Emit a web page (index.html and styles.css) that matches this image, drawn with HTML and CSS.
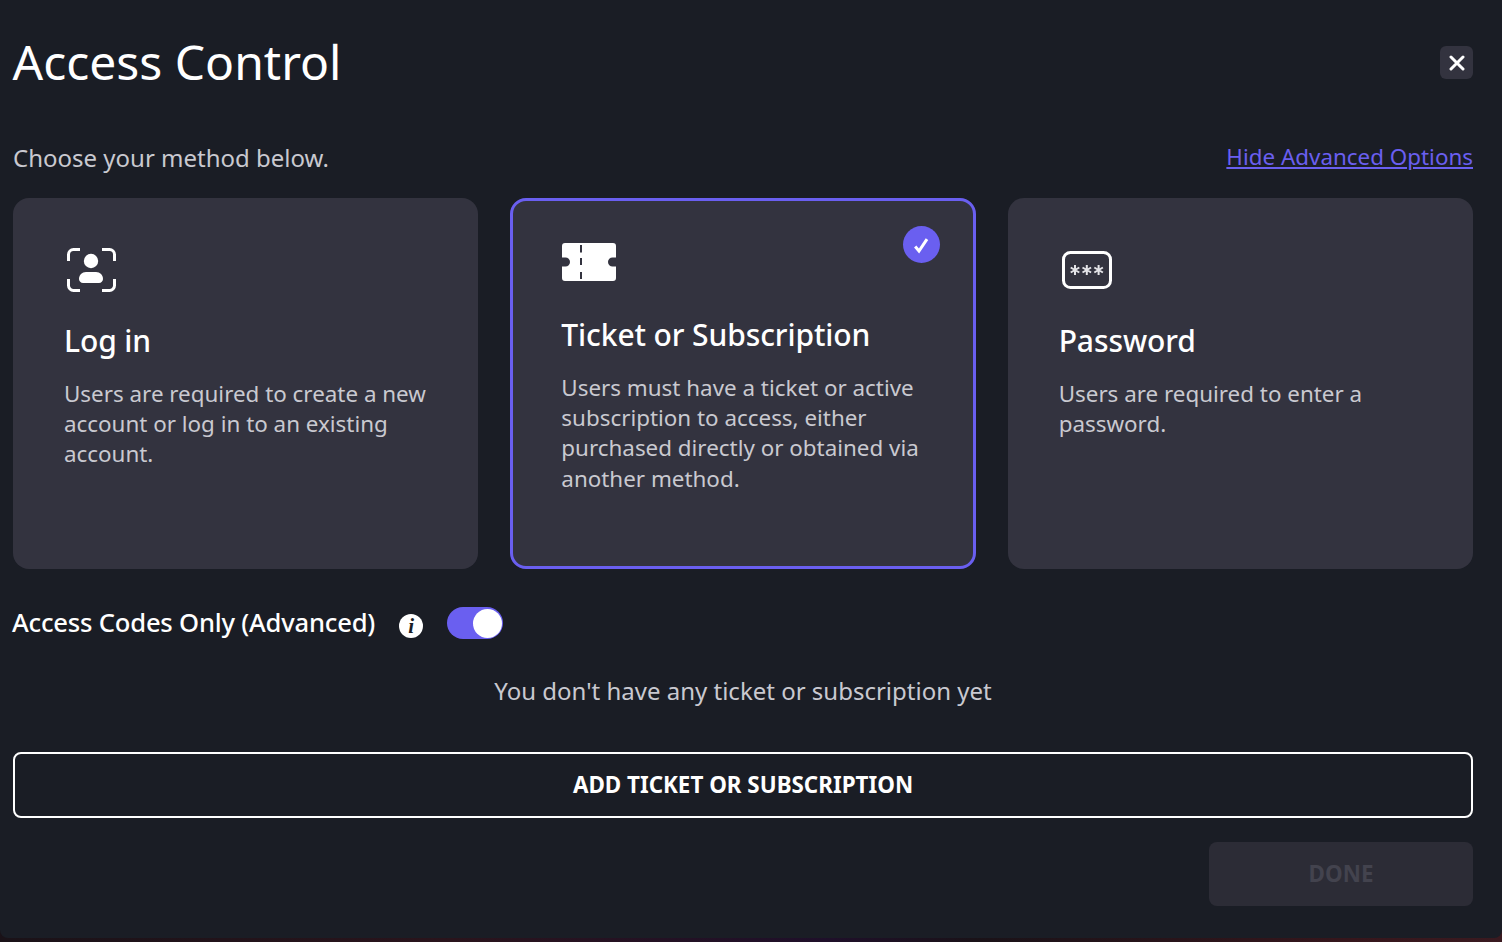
FILE: index.html
```html
<!DOCTYPE html>
<html lang="en">
<head>
<meta charset="utf-8">
<title>Access Control</title>
<link rel="stylesheet" href="styles.css">
</head>
<body>
<main class="modal">
  <header class="head">
    <h1 class="title">Access Control</h1>
    <button class="close" type="button" aria-label="Close">
      <svg width="16" height="16" viewBox="0 0 16 16"><path d="M2 2l12 12M14 2L2 14" stroke="#fff" stroke-width="3" stroke-linecap="round" fill="none"/></svg>
    </button>
  </header>
  <div class="subrow">
    <p class="choose">Choose your method below.</p>
    <a class="link" href="#">Hide Advanced Options</a>
  </div>
  <section class="cards">
    <article class="card">
      <svg class="icon" width="54" height="48" viewBox="0 0 54 48" fill="none">
        <path d="M4.500 15V8.500a5 5 0 0 1 5-5H16M38 3.500h7.500a5 5 0 0 1 5 5V15M4.500 33v6.500a5 5 0 0 0 5 5H16M38 44.500h7.500a5 5 0 0 0 5-5V33" stroke="#fff" stroke-width="3"/>
        <circle cx="27" cy="15" r="7.200" fill="#fff"/>
        <path fill="#fff" d="M15 33c0-4 3-7 7-7h10c4 0 7 3 7 7c0 2.200-1.800 4-4 4H19c-2.200 0-4-1.800-4-4z"/>
      </svg>
      <h2 class="card-title">Log in</h2>
      <p class="card-text">Users are required to create a new account or log in to an existing account.</p>
    </article>
    <article class="card selected">
      <span class="check">
        <svg width="18" height="18" viewBox="0 0 18 18" fill="none"><path d="M3.200 10.500L7 15l8-11.800" stroke="#fff" stroke-width="3"/></svg>
      </span>
      <svg class="icon ticket" width="54" height="38" viewBox="0 0 54 38">
        <path fill="#fff" d="M3 0h48a3 3 0 0 1 3 3v11.500h-3.500a4.500 4.500 0 0 0 0 9H54V35a3 3 0 0 1-3 3H3a3 3 0 0 1-3-3V23.500h3.500a4.500 4.500 0 0 0 0-9H0V3a3 3 0 0 1 3-3z"/>
        <path d="M19 2v7.500M19 15v7M19 29v7" stroke="#33333f" stroke-width="2"/>
      </svg>
      <h2 class="card-title">Ticket or Subscription</h2>
      <p class="card-text">Users must have a ticket or active subscription to access, either purchased directly or obtained via another method.</p>
    </article>
    <article class="card">
      <svg class="icon" width="54" height="48" viewBox="0 0 54 48" fill="none">
        <rect x="4.500" y="6.500" width="47" height="35" rx="7" stroke="#fff" stroke-width="3"/>
        <g stroke="#e4e4e8" stroke-width="2"><path d="M16 19v10M11.700 21.500l8.600 5M20.300 21.500l-8.600 5"/><path d="M27.800 19v10M23.500 21.500l8.600 5M32.100 21.500l-8.600 5"/><path d="M39.600 19v10M35.300 21.500l8.600 5M43.900 21.500l-8.600 5"/></g>
      </svg>
      <h2 class="card-title">Password</h2>
      <p class="card-text">Users are required to enter a password.</p>
    </article>
  </section>
  <div class="advanced">
    <span class="adv-label">Access Codes Only (Advanced)</span>
    <span class="info">i</span>
    <span class="toggle"><span class="knob"></span></span>
  </div>
  <p class="empty">You don't have any ticket or subscription yet</p>
  <button class="add" type="button">ADD TICKET OR SUBSCRIPTION</button>
  <div class="foot">
    <button class="done" type="button" disabled>DONE</button>
  </div>
</main>
</body>
</html>
```
FILE: styles.css
```css
* { box-sizing: border-box; }
html, body { margin: 0; height: 100%; }
body {
  background: linear-gradient(90deg, #1a1218 0%, #2a141c 30%, #1f0f2a 55%, #1a1218 65%, #36161c 90%, #3a1a20 100%);
  font-family: "Noto Sans", sans-serif;
  color: #fff;
  overflow: hidden;
  height: 942px;
}
.modal {
  height: 938px;
  padding: 0 29px 0 13px;
  background: #1a1d25;
  border-radius: 0 0 8px 8px;
}
.head {
  display: flex;
  justify-content: space-between;
  align-items: center;
  height: 125px;
}
.title {
  margin: 0 0 0 -0.5px;
  padding-bottom: 1px;
  font-size: 48px;
  font-weight: 400;
  line-height: 120px;
}
.close {
  width: 33px; height: 33px;
  border: 0; padding: 0;
  border-radius: 6px;
  background: #33333f;
  display: flex; align-items: center; justify-content: center;
}
.subrow {
  display: flex;
  justify-content: space-between;
  align-items: center;
  height: 73px;
  padding-bottom: 7px;
}
.choose { margin: 0; font-size: 24px; line-height: 34px; color: #c9c9d0; }
.link { margin-bottom: 3px; font-size: 22.400px; line-height: 30px; color: #6a5ff0; }
.cards {
  display: grid;
  grid-template-columns: repeat(3, 1fr);
  gap: 32px;
  height: 371px;
}
.card {
  position: relative;
  background: #33333f;
  border-radius: 16px;
  padding: 48px 40px 0 51px;
}
.card.selected {
  border: 3px solid #6a5ff0;
  padding: 42px 37px 0 48px;
}
.icon { display: block; }
.ticket { margin-left: 1px; }
.card-title {
  margin: 25px 0 0;
  font-size: 30px;
  font-weight: 500;
  letter-spacing: -0.1px;
  line-height: 44px;
}
.selected .card-title { margin-top: 32px; }
.card-text {
  margin: 16px 0 0;
  font-size: 22.400px;
  line-height: 30.200px;
  color: #c9c9d0;
}
.check {
  position: absolute;
  top: 25px; right: 33px;
  width: 37px; height: 37px;
  border-radius: 50%;
  background: #6a5ff0;
  display: flex; align-items: center; justify-content: center;
}
.advanced {
  display: flex;
  align-items: center;
  height: 32px;
  margin-top: 38px;
}
.adv-label { margin: 0 0 2px -1px; font-size: 25.600px; font-weight: 500; letter-spacing: -0.2px; }
.info {
  width: 24px; height: 24px;
  margin-left: 24px;
  margin-top: 6px;
  border-radius: 50%;
  background: #fff;
  color: #1a1d25;
  font-family: "Liberation Serif", serif;
  font-style: italic;
  font-weight: 700;
  font-size: 21px;
  line-height: 24px;
  text-align: center;
}
.toggle {
  width: 56px; height: 32px;
  margin-left: 24px;
  border-radius: 16px;
  background: #6a5ff0;
  position: relative;
}
.knob {
  position: absolute;
  top: 1.500px; right: 1px;
  width: 29px; height: 29px;
  border-radius: 50%;
  background: #fff;
}
.empty {
  margin: 35px 0 0;
  font-size: 24px;
  line-height: 34px;
  color: #c9c9d0;
  text-align: center;
}
.add {
  display: block;
  width: 100%;
  height: 66px;
  margin-top: 44px;
  padding: 0 0 2px;
  border: 2px solid #fff;
  border-radius: 8px;
  background: transparent;
  color: #fff;
  font: 700 22.400px "Noto Sans", sans-serif;
}
.foot { display: flex; justify-content: flex-end; margin-top: 24px; }
.done {
  width: 264px; height: 64px;
  padding: 0 0 2px;
  border: 0;
  border-radius: 8px;
  background: #2c2c36;
  color: #43434e;
  font: 700 22.400px "Noto Sans", sans-serif;
}
```
